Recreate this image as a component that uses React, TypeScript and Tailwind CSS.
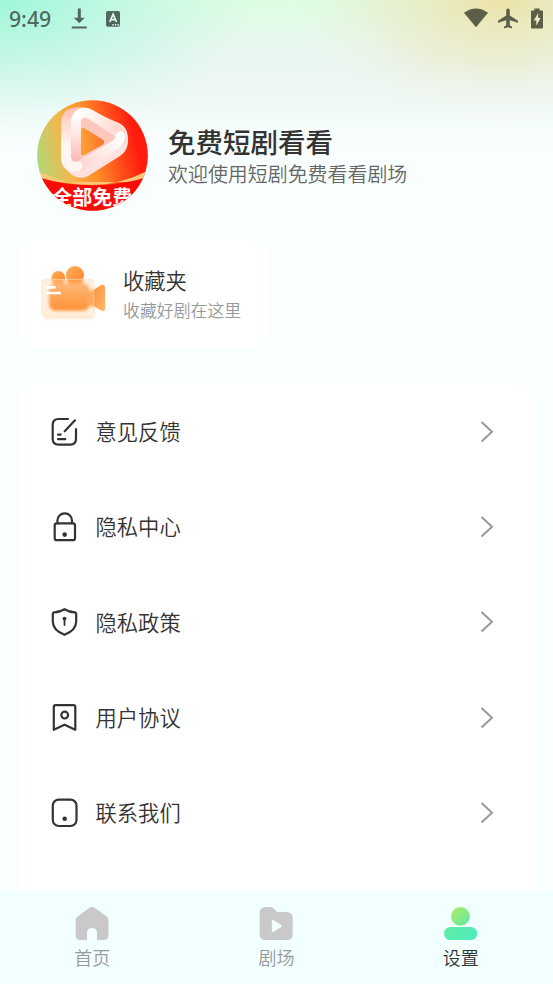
import type { ReactNode } from "react";

const MENU_ITEMS: { label: string; icon: ReactNode }[] = [
  {
    label: "意见反馈",
    icon: (
      <>
        <path d="M18 3H8.5Q2.7 3 2.7 8.8V22.8Q2.7 28.6 8.5 28.6H20.2Q26 28.6 26 22.8V13" />
        <path d="M25 4.3 14.7 15.3M8 18.6h2.7M8 23.1h7.3" />
      </>
    ),
  },
  {
    label: "隐私中心",
    icon: (
      <>
        <rect x="4.7" y="12.3" width="20.3" height="16.9" rx="2" />
        <path d="M7.4 12.3V9.6C7.4 5.4 10.6 2.4 14.8 2.4S22 5.4 22 9.6v2.7" />
        <circle cx="14.7" cy="23.6" r="2.3" fill="#333" stroke="none" />
      </>
    ),
  },
  {
    label: "隐私政策",
    icon: (
      <>
        <path d="M14.5 3.2C11 5.4 7.5 6.1 4.2 6.3Q2.8 6.5 2.8 8V15.5C2.8 22 8 26.2 14.5 28.8 21 26.2 26.2 22 26.2 15.5V8Q26.2 6.5 24.8 6.3C21.5 6.1 18 5.4 14.5 3.2Z" />
        <circle cx="14.5" cy="12.6" r="1.9" fill="#333" stroke="none" />
        <path d="M14.5 13v6" strokeWidth="1.8" />
      </>
    ),
  },
  {
    label: "用户协议",
    icon: (
      <>
        <path d="M3.8 27.8V5Q3.8 3.2 5.6 3.2H23.5Q25.3 3.2 25.3 5V27.8L14.5 22.8Z" />
        <circle cx="14.7" cy="13.1" r="3.4" />
      </>
    ),
  },
  {
    label: "联系我们",
    icon: (
      <>
        <rect x="2.8" y="2.6" width="23.7" height="26.4" rx="6" />
        <circle cx="14.7" cy="21.7" r="2.3" fill="#333" stroke="none" />
      </>
    ),
  },
];

const TABS = [
  {
    label: "首页",
    active: false,
    icon: (
      <path
        fill="#c9c9c9"
        d="M14.4 .8Q17 -1 19.6 .8L31.6 9.6Q33.5 11.2 33.5 13.5V28.5Q33.5 33 29 33H22V26Q22 21 17 21T12 26V33H5Q.7 33 .7 28.5V13.5Q.7 11.2 2.6 9.6Z"
      />
    ),
  },
  {
    label: "剧场",
    active: false,
    icon: (
      <path
        fill="#c9c9c9"
        fillRule="evenodd"
        d="M6.5 0H11.5Q13.5 0 15 1.7L16.6 3.8Q17.7 5 19.3 5H27.5Q33.7 5 33.7 11V27Q33.7 33 27.7 33H6.5Q.7 33 .7 27V6Q.7 0 6.5 0ZM12.8 14.3V23.6Q12.8 25.8 14.7 24.8L22 20.2Q23.6 19 22 17.8L14.7 13.2Q12.8 12.2 12.8 14.3Z"
      />
    ),
  },
  {
    label: "设置",
    active: true,
    icon: (
      <>
        <defs>
          <linearGradient id="head" x1="0" y1="0" x2="1" y2="1">
            <stop offset="0" stopColor="#b0ec62" />
            <stop offset="1" stopColor="#5ee9a6" />
          </linearGradient>
          <linearGradient id="body" x1="0" y1="0" x2="1" y2=".4">
            <stop offset="0" stopColor="#63eba3" />
            <stop offset="1" stopColor="#50ebb9" />
          </linearGradient>
        </defs>
        <circle cx="16.4" cy="9.4" r="9.4" fill="url(#head)" />
        <rect x="0" y="20" width="33.2" height="13" rx="6.3" fill="url(#body)" />
      </>
    ),
  },
];

function StatusBar() {
  return (
    <div className="flex h-[38px] shrink-0 items-center pr-[10px] pl-[9px]">
      <span className="w-[62px] font-['Noto_Sans',sans-serif] text-[21.2px] leading-none font-medium text-[#50695f]">
        9:49
      </span>
      <svg width="17" height="22" viewBox="0 0 17 22" fill="#50695f">
        <path d="M6.8 .5h3v9.2h4L8.3 15.3 2.8 9.7h4zM.8 18.5h15v2H.8z" />
      </svg>
      <svg className="ml-[17px]" width="17" height="17" viewBox="0 0 17 17">
        <rect x="1" y="0" width="14" height="15.8" rx="1.8" fill="#50695f" />
        <path d="M4.8 11 8.1 3.2 11.5 11M6 8.7h4.2" fill="none" stroke="#dffaf0" strokeWidth="1.7" />
        <path d="M7.3 13.7h1.4M9.9 13.7h1.4M12.5 13.7h1.4" stroke="#dffaf0" strokeWidth="1.4" />
      </svg>
      <div className="ml-auto flex items-center pb-0.5 text-[#5d5e48]">
        <svg width="24" height="20" viewBox="0 0 24 20" fill="currentColor">
          <path d="M0 4.8Q12-3.8 24 4.8L12 19.3Z" />
        </svg>
        <svg className="ml-2.5" width="20" height="21" viewBox="0 0 20 21" fill="currentColor">
          <path d="M20 14.8v-2l-8.2-5.2V2.2Q11.8.5 10 .5T8.2 2.2v5.4L0 12.8v2l8.2-2.5v5L6 18.8v1.6l4-1.1 4 1.1v-1.6l-2.2-1.5v-5z" />
        </svg>
        <svg className="ml-[13px]" width="12" height="21" viewBox="0 0 12 21">
          <path fill="currentColor" d="M3.4.4h5.2v2H11q1 0 1 1v16q0 1-1 1H1q-1 0-1-1v-16q0-1 1-1h2.4z" />
          <path fill="#edebc4" d="M7.2 5 2.8 12.5h2.5v5.2L9.6 10H7.2z" />
        </svg>
      </div>
    </div>
  );
}

function Avatar() {
  return (
    <svg className="shrink-0" width="111" height="111" viewBox="36 29 333 333">
      <defs>
        <clipPath id="disc">
          <circle cx="202.5" cy="195.5" r="166" />
        </clipPath>
        <linearGradient id="sky" x1="36" y1="220" x2="369" y2="145" gradientUnits="userSpaceOnUse">
          <stop offset="0" stopColor="#aed979" />
          <stop offset=".27" stopColor="#f5b64b" />
          <stop offset=".48" stopColor="#ff912a" />
          <stop offset=".72" stopColor="#ff4c1a" />
          <stop offset=".9" stopColor="#ff1b0d" />
        </linearGradient>
        <linearGradient id="back" x1="130" y1="60" x2="180" y2="250" gradientUnits="userSpaceOnUse">
          <stop offset="0" stopColor="#ffc4b5" />
          <stop offset=".45" stopColor="#ffe9e5" />
          <stop offset="1" stopColor="#ffe0df" />
        </linearGradient>
        <linearGradient id="front" x1="0" y1="70" x2="0" y2="230" gradientUnits="userSpaceOnUse">
          <stop offset="0" stopColor="#fff" />
          <stop offset=".45" stopColor="#ffe2dd" />
          <stop offset="1" stopColor="#ffacac" />
        </linearGradient>
        <linearGradient id="top" x1="160" y1="70" x2="305" y2="150" gradientUnits="userSpaceOnUse">
          <stop offset="0" stopColor="#fff" />
          <stop offset=".55" stopColor="#ffe4dd" />
          <stop offset="1" stopColor="#ffc9bd" />
        </linearGradient>
        <linearGradient id="low" x1="160" y1="230" x2="290" y2="150" gradientUnits="userSpaceOnUse">
          <stop offset="0" stopColor="#ffd3d0" />
          <stop offset=".5" stopColor="#ffe8e5" />
          <stop offset="1" stopColor="#fff" />
        </linearGradient>
        <linearGradient id="left" x1="0" y1="90" x2="0" y2="230" gradientUnits="userSpaceOnUse">
          <stop offset="0" stopColor="#ffd6cb" />
          <stop offset=".5" stopColor="#fff3f0" />
          <stop offset="1" stopColor="#fff" />
        </linearGradient>
        <linearGradient id="hole" x1="168" y1="0" x2="240" y2="0" gradientUnits="userSpaceOnUse">
          <stop offset="0" stopColor="#ffa331" />
          <stop offset="1" stopColor="#fb702c" />
        </linearGradient>
      </defs>
      <g clipPath="url(#disc)">
        <rect x="36" y="29" width="333" height="333" fill="url(#sky)" />
        <path d="M30 237Q202 330 375 237V275H30Z" fill="#ffc778" />
        <path d="M30 258Q202 311 375 258V370H30Z" fill="#fb0b08" />
        <path
          fill="url(#back)"
          d="M108 98C108 65 132 50 160 51C184 48 198 59 212 67L283 99C304 110 309 128 309 149C309 174 300 186 285 197L194 254C178 265 154 265 139 252L121 235C110 225 108 214 108 199Z"
        />
        <path d="M165 88Q178 78 196 92L268 134Q278 150 262 170L180 216Q166 220 165 205Z" fill="#ffc6bb" />
        <g fill="none" strokeLinejoin="round" strokeLinecap="round">
          <path d="M152 150V101C152 68 177 60 198 73L274 116C288 125 292 140 288 152" stroke="url(#top)" strokeWidth="29" />
          <path d="M152.5 104 152 200" stroke="url(#front)" strokeWidth="30" />
          <path d="M123.5 98 123 190" stroke="url(#left)" strokeWidth="29" />
          <path d="M166 224 270 164Q286 153 286 138" stroke="url(#low)" strokeWidth="30" />
          <path d="M123 190C122 220 137 234 158 227" stroke="#fff5f4" strokeWidth="29" />
        </g>
        <path d="M168 119Q169 111 178 114L231 147Q243 155 233 163L181 192Q168 200 168 187Z" fill="url(#hole)" />
        <text
          x="202"
          y="344"
          textAnchor="middle"
          textLength="240"
          className="fill-white font-['Noto_Sans_CJK_SC',sans-serif] text-[60px] font-bold">
          全部免费
        </text>
      </g>
    </svg>
  );
}

function CameraIcon() {
  return (
    <svg className="mt-1" width="72" height="64" viewBox="0 0 216 192">
      <defs>
        <linearGradient id="reel" x1="0" y1="0" x2="1" y2="1">
          <stop offset="0" stopColor="#ffb15c" />
          <stop offset="1" stopColor="#ff8126" />
        </linearGradient>
        <linearGradient id="lens" x1="0" y1="0" x2="1" y2="1">
          <stop offset="0" stopColor="#ff9238" />
          <stop offset="1" stopColor="#ffb873" />
        </linearGradient>
        <linearGradient id="core" x1="0" y1="0" x2="0" y2="1">
          <stop offset="0" stopColor="#ffb775" />
          <stop offset="1" stopColor="#ff9238" />
        </linearGradient>
        <filter id="soft" x="-20%" y="-20%" width="140%" height="140%">
          <feGaussianBlur stdDeviation="5" />
        </filter>
        <clipPath id="glass">
          <rect x="4" y="45" width="158" height="112" rx="11" />
        </clipPath>
      </defs>
      <rect x="9" y="58" width="155" height="106" rx="12" fill="#ffc793" opacity=".45" filter="url(#soft)" />
      <path d="M161 78 183 64Q195 60 195 71V133Q195 146 183 139L161 126Z" fill="#ffc793" opacity=".5" filter="url(#soft)" />
      <circle cx="55" cy="42" r="21" fill="url(#reel)" />
      <circle cx="105" cy="33" r="27" fill="url(#reel)" />
      <path d="M161 78 183 64Q195 60 195 71V133Q195 146 183 139L161 126Z" fill="url(#lens)" />
      <rect x="4" y="45" width="158" height="112" rx="11" fill="#fff0de" />
      <g clipPath="url(#glass)">
        <g filter="url(#soft)">
          <circle cx="55" cy="44" r="20" fill="#ffa858" />
          <circle cx="105" cy="40" r="26" fill="#ff9f4a" />
          <rect x="27" y="58" width="122" height="82" rx="20" fill="url(#core)" />
          <path d="M140 88 175 70V135L140 120Z" fill="#ffa95d" />
        </g>
      </g>
      <rect x="5" y="46" width="156" height="110" rx="10" fill="none" stroke="#ffe3c6" strokeWidth="2" opacity=".8" />
      <path d="M21 70h23M21 87h38" stroke="#fff" strokeWidth="8" strokeLinecap="round" />
    </svg>
  );
}

export default function App() {
  return (
    <div className="flex h-[984px] w-full flex-col overflow-hidden bg-[#f9fffe] bg-[linear-gradient(180deg,rgba(249,255,254,0)_0,rgba(249,255,254,.1)_60px,rgba(249,255,254,.35)_95px,rgba(249,255,254,.8)_130px,#f9fffe_155px),radial-gradient(ellipse_250px_150px_at_0_0,#9ef7d8_0%,rgba(158,247,216,.6)_35%,rgba(158,247,216,.2)_75%,rgba(158,247,216,0)_100%),radial-gradient(ellipse_200px_130px_at_500px_0,#ebe3a9_0%,rgba(235,227,169,.6)_35%,rgba(235,227,169,.2)_70%,rgba(235,227,169,0)_100%),radial-gradient(ellipse_230px_55px_at_270px_0,#dcfde0_0%,rgba(220,253,224,0)_100%),linear-gradient(180deg,#e8f8f0,#e9f4f2_90px,#e9f6f3_160px)] font-['Noto_Sans_CJK_SC',sans-serif] font-[350] text-[#333]">
      <StatusBar />

      {/* Profile */}
      <header className="mt-[62px] flex h-[111px] shrink-0 items-center pl-[37px]">
        <Avatar />
        <div className="ml-5 pt-0.5">
          <h1 className="text-[27.5px] leading-[34px] font-medium">免费短剧看看</h1>
          <p className="text-[19.95px] leading-[32px] text-[#666]">欢迎使用短剧免费看看剧场</p>
        </div>
      </header>

      {/* Favourites */}
      <section className="mt-[29px] ml-[18px] flex h-[108px] w-[252px] shrink-0 items-center rounded-[20px] bg-white pl-[22px]">
        <CameraIcon />
        <div className="ml-[11px]">
          <h2 className="text-[21.3px] leading-8">收藏夹</h2>
          <p className="text-[16.9px] leading-7 text-[#999]">收藏好剧在这里</p>
        </div>
      </section>

      {/* Menu */}
      <main className="mx-[18px] mt-9 min-h-0 flex-1 overflow-hidden rounded-t-[20px] bg-white">
        {MENU_ITEMS.map((item) => (
          <div key={item.label} className="flex h-[95.4px] items-center pr-[41px] pl-8">
            <svg
              width="30"
              height="32"
              viewBox="0 0 30 32"
              fill="none"
              stroke="#333"
              strokeWidth="2.2"
              strokeLinecap="round"
              strokeLinejoin="round">
              {item.icon}
            </svg>
            <span className="ml-[15.5px] pb-0.5 text-[21.3px]">{item.label}</span>
            <svg className="ml-auto" width="14" height="22" viewBox="0 0 14 22" fill="none" stroke="#999" strokeWidth="2">
              <path d="M1.5 1 12 10.7 1.5 20.4" />
            </svg>
          </div>
        ))}
      </main>

      <nav className="grid h-[93px] shrink-0 grid-cols-3 bg-[#f2ffff]">
        {TABS.map((tab) => (
          <div key={tab.label} className="flex flex-col items-center pt-4">
            <svg width="34" height="33" viewBox="0 0 34 33">
              {tab.icon}
            </svg>
            <span className={`mt-1 text-[18px] leading-[27px] ${tab.active ? "text-[#333]" : "text-[#999]"}`}>
              {tab.label}
            </span>
          </div>
        ))}
      </nav>
    </div>
  );
}
